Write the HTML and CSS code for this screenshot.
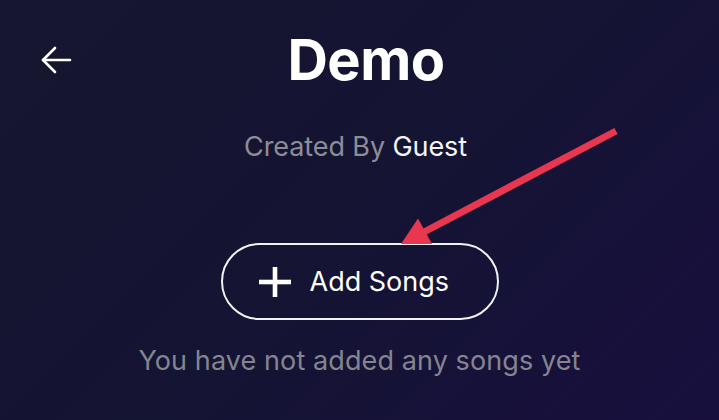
FILE: index.html
```html
<!DOCTYPE html>
<html lang="en">
<head>
    <meta charset="UTF-8">
    <meta name="viewport" content="width=device-width, initial-scale=1.0">
    <title>Demo</title>
    <link rel="stylesheet" href="styles.css">
</head>
<body>
    <div class="page">
        <div class="header">
            <button class="back-btn" aria-label="Back">
                <svg width="32" height="28" viewBox="0 0 32 28" fill="none" stroke="#fff" stroke-width="2.6" stroke-linecap="round" stroke-linejoin="round">
                    <path d="M30 14H3"/>
                    <path d="M15 2L3 14L15 26"/>
                </svg>
            </button>
            <h1 class="title">Demo</h1>
            <span></span>
        </div>

        <p class="created">Created By <span class="author">Guest</span></p>

        <button class="add-btn">
            <svg width="32" height="32" viewBox="0 0 32 32" stroke="#fff" stroke-width="4.6">
                <path d="M0 16H32"/>
                <path d="M16 1V31"/>
            </svg>
            <span>Add Songs</span>
        </button>

        <p class="empty">You have not added any songs yet</p>

        <!-- annotation arrow -->
        <svg class="pointer" width="719" height="420" viewBox="0 0 719 420">
            <line x1="616" y1="131" x2="424" y2="232" stroke="#e8374f" stroke-width="7"/>
            <polygon points="401,244 418,218.5 432,244" fill="#e8374f"/>
        </svg>
    </div>
</body>
</html>
```

FILE: styles.css
```css
html, body {
    margin: 0;
    height: 100%;
}
body {
    font-family: Inter, "Noto Sans", sans-serif;
    background: linear-gradient(135deg, #161630 0%, #141433 50%, #180f3e 100%);
    color: #ffffff;
    overflow: hidden;
}
.page {
    position: relative;
    height: 420px;
    display: flex;
    flex-direction: column;
    align-items: center;
}
.header {
    width: 100%;
    box-sizing: border-box;
    padding: 28px 40px 0 40px;
    display: grid;
    grid-template-columns: 1fr auto 1fr;
    align-items: center;
}
.back-btn {
    justify-self: start;
    background: none;
    border: none;
    padding: 0;
    display: flex;
    cursor: pointer;
}
.title {
    margin: 0;
    padding-left: 13px;
    font-size: 56px;
    line-height: 64px;
    font-weight: 700;
    letter-spacing: -0.5px;
}
.created {
    margin: 39px 0 0 0;
    padding-right: 8px;
    font-size: 27px;
    line-height: 32px;
    color: #8d8d97;
    letter-spacing: -0.1px;
}
.author {
    color: #f4f4f8;
}
.add-btn {
    margin-top: 80px;
    width: 278px;
    height: 77px;
    box-sizing: border-box;
    padding: 0 0 0 36px;
    display: flex;
    align-items: center;
    gap: 19px;
    background: transparent;
    border: 2px solid #f2f2f6;
    border-radius: 40px;
    color: #ffffff;
    font-family: inherit;
    font-size: 27px;
    letter-spacing: 0;
    cursor: pointer;
}
.empty {
    margin: 25px 0 0 0;
    font-size: 27px;
    line-height: 32px;
    color: #85858f;
    letter-spacing: 0.1px;
}
.pointer {
    position: absolute;
    left: 0;
    top: 0;
    pointer-events: none;
}
```
